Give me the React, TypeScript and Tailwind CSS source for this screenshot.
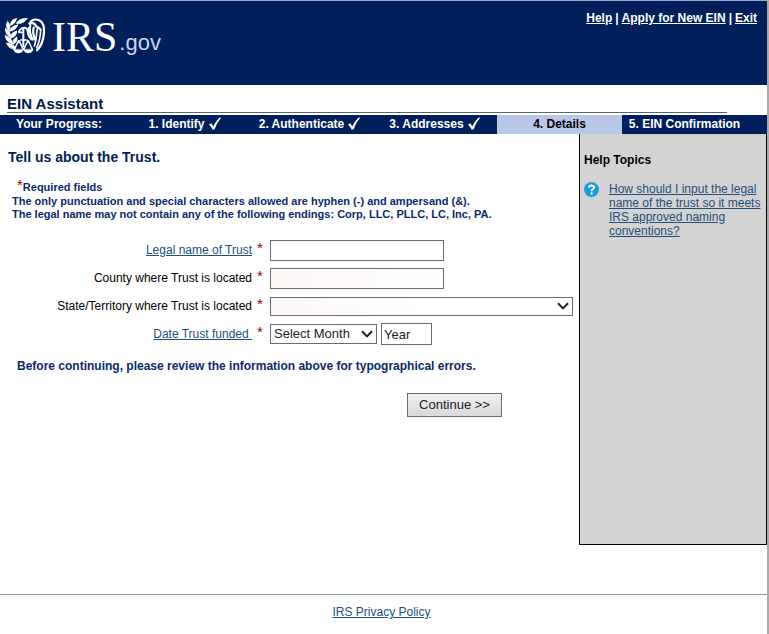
import type { ReactNode } from "react";

const steps = [
  { label: "1. Identify", done: true },
  { label: "2. Authenticate", done: true },
  { label: "3. Addresses", done: true },
  { label: "4. Details", current: true },
  { label: "5. EIN Confirmation" },
];

const EagleLogo = () => (
  <svg viewBox="15 54 120 108" className="h-9 w-10" fill="none" stroke="#fff" strokeLinecap="round" aria-hidden="true">
    {/* laurel branch */}
    <g fill="#fff" strokeWidth="2.5" strokeLinejoin="round">
      <path d="M49 56c-10 1-17 7-18 20 10-3 16-9 18-20z" />
      <path d="M81 56c-14-2-26 4-32 14 13 2 25-3 32-14z" />
      <path d="M23 65c-6 8-5 17 3 27 6-11 4-20-3-27z" />
      <path d="M53 75c-13 2-22 8-25 19 14-2 22-9 25-19z" />
      <path d="M16 86c0 13 5 20 15 25 1-12-5-21-15-25z" />
      <path d="M50 94c-12 2-19 9-19 21 12-3 19-10 19-21z" />
      <path d="M16 107c1 13 9 21 22 24-2-13-10-21-22-24z" />
      <path d="M50 112c-9 4-13 11-10 21 9-5 13-12 10-21z" />
      <path d="M20 130c5 12 14 18 27 17-4-12-14-17-27-17z" />
    </g>
    {/* small eagle and scales */}
    <g strokeWidth="5">
      <path d="M70 84v54" strokeWidth="6" />
      <path d="M57 95c4-9 10-12 17-12 5 1 8 4 8 9M56 97h10M62 120h19" />
      <path d="M56 122l-13 26M57 122l13 26M84 122l-13 26M85 122l12 26" strokeWidth="4.5" />
      <path d="M41 149c3 13 25 13 29 0zM71 149c3 13 25 13 28 0z" fill="#fff" strokeWidth="2" />
    </g>
    {/* large eagle head and wing */}
    <g strokeWidth="6.5">
      <path d="M90 71c2-12 16-15 27-10 11 5 16 17 15 34-1 23-7 42-21 56" />
      <path d="M88 71c10-4 17-1 20 8 5 3 10 4 14 10" strokeWidth="7" />
      <path d="M91 77c-3 10-2 26 8 42M101 83c-3 11-1 24 6 37" />
      <path d="M112 86c-3 16-3 35-9 52M122 90c-1 20-4 38-12 53" strokeWidth="5" />
      <path d="M86 84c-5 13-1 25 8 34" />
    </g>
  </svg>
);

const Tick = () => (
  <svg viewBox="0 0 12 13" className="h-[13px] w-3" role="img" aria-label="Complete">
    <path d="M0 7.5 2.3 6.3 4.3 9.6C6 5.6 8.4 2.3 11.2.2L12 .9C9.3 3.9 7.2 7.6 5.7 12.3L3.6 12.8C2.8 10.8 1.5 9 0 7.5Z" fill="#fff" />
  </svg>
);

const Chevron = () => (
  <svg viewBox="0 0 12 8" className="pointer-events-none absolute right-1 top-1/2 h-2 w-3 -translate-y-1/2" aria-hidden="true">
    <path d="M1 1.2 6 6.4 11 1.2" fill="none" stroke="#222" strokeWidth="2" />
  </svg>
);

const Star = () => <span className="text-[15px] leading-4 text-[#a00000]">*</span>;

interface FieldRowProps {
  id: string;
  label: string;
  link?: boolean;
  children: ReactNode;
}

const FieldRow = ({ id, label, link = false, children }: FieldRowProps) => (
  <div className="flex h-7 items-center">
    <label htmlFor={id} className="w-[252px] shrink-0 text-right">
      {link ? <a href="#help" className="text-[#234f7d] underline">{label}</a> : label}
    </label>
    <span className="flex h-5 w-[18px] shrink-0 pl-[5px]">
      <Star />
    </span>
    {children}
  </div>
);

const App = () => {
  return (
    <div className="min-h-screen border-r-2 border-t border-r-[#ababab] border-t-[#8fa9cf] bg-white font-['Liberation_Sans',Arial,sans-serif] text-xs text-black">
      <header className="flex h-[84px] items-start justify-between bg-[#001f5b] pl-[5px] pr-2.5 text-white">
        <div className="flex items-end pt-[15px]">
          <div className="pb-1">
            <EagleLogo />
          </div>
          <span className="pl-[7px] font-['Liberation_Serif',serif] text-[42px] leading-[42px]">IRS</span>
          <span className="pl-0.5 text-[22px] leading-[30px] text-[#c9d5ee]">.gov</span>
        </div>
        <nav className="flex gap-[3px] pt-[9px] font-bold leading-4">
          <a href="#help" className="underline">Help</a>|
          <a href="#apply" className="underline">Apply for New EIN</a>|
          <a href="#exit" className="underline">Exit</a>
        </nav>
      </header>

      <h1 className="ml-[7px] mr-10 mt-2.5 h-[18px] border-b border-[#5b6478] text-[15px] font-bold leading-[18px] text-[#001848]">
        EIN Assistant
      </h1>

      <div className="mt-0.5 grid h-[19px] grid-cols-[122fr_repeat(5,125fr)] bg-[#001f5b] pr-5 text-center font-bold leading-[18px] text-white">
        <span className="pr-1">Your Progress:</span>
        {steps.map((step) => (
          <span
            key={step.label}
            className={step.current ? "bg-[#b8c7e8] text-black" : "flex items-start justify-center gap-1 whitespace-nowrap"}
          >
            {step.label}
            {step.done && (
              <span className="pt-0.5">
                <Tick />
              </span>
            )}
          </span>
        ))}
      </div>

      <div className="flex">
        <main className="min-w-0 flex-1">
          <h2 className="pl-2 pt-3.5 text-sm font-bold leading-[18px] text-[#001f4f]">Tell us about the Trust.</h2>
          <div className="pl-3 pt-[11px] text-[11px] font-bold leading-[13px] text-[#0b2a6b]">
            <p className="flex h-[18px] items-end pb-px pl-[5px]">
              <span className="self-start font-normal"><Star /></span>Required fields
            </p>
            <p>The only punctuation and special characters allowed are hyphen (-) and ampersand (&amp;).</p>
            <p>The legal name may not contain any of the following endings: Corp, LLC, PLLC, LC, Inc, PA.</p>
          </div>

          <form className="pt-[15px]" onSubmit={(e) => e.preventDefault()}>
            <FieldRow id="legalName" label="Legal name of Trust" link>
              <input id="legalName" type="text" className="h-[21px] w-[174px] border border-[#6b6b6b] px-1" />
            </FieldRow>
            <FieldRow id="county" label="County where Trust is located">
              <input
                id="county"
                type="text"
                className="h-[21px] w-[174px] border border-[#6b6b6b] bg-linear-to-r from-[#fdf7f6] to-white px-1"
              />
            </FieldRow>
            <FieldRow id="state" label="State/Territory where Trust is located">
              <div className="relative mr-1.5 flex-1">
                <select
                  id="state"
                  className="block h-[19px] w-full appearance-none border border-[#6b6b6b] bg-linear-to-r from-[#fdf7f6] to-white to-50% px-1"
                >
                  <option></option>
                </select>
                <Chevron />
              </div>
            </FieldRow>
            <FieldRow id="month" label="Date Trust funded&nbsp;" link>
              <div className="relative w-[107px]">
                <select id="month" className="block h-5 w-full appearance-none border border-[#6b6b6b] bg-white pl-[3px] text-[13px] text-[#222]">
                  <option>Select Month</option>
                </select>
                <Chevron />
              </div>
              <input
                type="text"
                aria-label="Year"
                defaultValue="Year"
                className="ml-1 h-[22px] w-[51px] border border-[#6b6b6b] px-0.5 text-[13px] text-[#222]"
              />
            </FieldRow>

            <p className="pl-[17px] pt-2.5 font-bold leading-4 text-[#0b2a6b]">
              Before continuing, please review the information above for typographical errors.
            </p>
            <div className="flex justify-end pr-[77px] pt-[19px]">
              <button type="submit" className="h-6 w-[95px] border border-[#6b6b6b] bg-linear-to-b from-[#f0f0f0] to-[#d9d9d9] text-[13px] text-[#222]">
                Continue &gt;&gt;
              </button>
            </div>
          </form>
        </main>

        <aside className="min-h-[411px] w-[188px] shrink-0 border border-t-0 border-black bg-[#d3d3d3] px-1">
          <h2 className="pt-[18px] font-bold leading-4">Help Topics</h2>
          <div className="flex gap-2.5 pt-3.5">
            <svg viewBox="0 0 15 15" className="h-[15px] w-[15px] shrink-0" aria-hidden="true">
              <circle cx="7.5" cy="7.5" r="7.5" fill="#1a9ad6" />
              <path d="M5 5.7C5.1 2.8 10 2.8 10 5.6 10 7.3 7.6 7.3 7.6 9.2" fill="none" stroke="#fff" strokeWidth="1.9" />
              <circle cx="7.6" cy="11.5" r="1.15" fill="#fff" />
            </svg>
            <a href="#legal-name" className="leading-[14px] text-[#234f7d] underline">
              How should I input the legal name of the trust so it meets IRS approved naming conventions?
            </a>
          </div>
        </aside>
      </div>

      <footer className="mt-[49px] border-t border-[#8795a5] pr-1 pt-2.5 text-center leading-[14px]">
        <a href="#privacy" className="text-[#234f7d] underline">IRS Privacy Policy</a>
      </footer>
    </div>
  );
};

export default App;
